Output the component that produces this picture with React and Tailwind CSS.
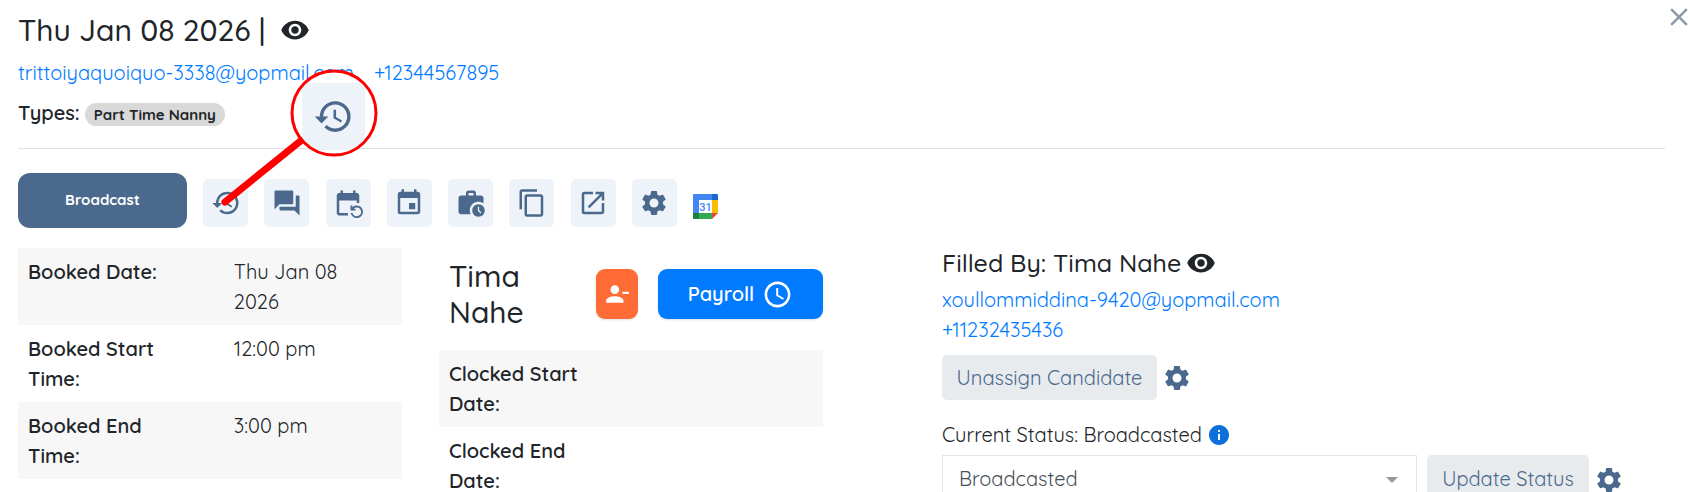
import {
  MdClose,
  MdContentCopy,
  MdEvent,
  MdEventRepeat,
  MdForum,
  MdHistory,
  MdInfo,
  MdOpenInNew,
  MdPersonRemove,
  MdSchedule,
  MdSettings,
  MdVisibility,
  MdWorkHistory,
} from "react-icons/md";

const tools = [
  { label: "History", Icon: MdHistory },
  { label: "Messages", Icon: MdForum },
  { label: "Repeat booking", Icon: MdEventRepeat },
  { label: "Event", Icon: MdEvent },
  { label: "Work history", Icon: MdWorkHistory },
  { label: "Copy", Icon: MdContentCopy },
  { label: "Open", Icon: MdOpenInNew },
  { label: "Settings", Icon: MdSettings },
];

const booked = [
  ["Booked Date:", "Thu Jan 08 2026"],
  ["Booked Start Time:", "12:00 pm"],
  ["Booked End Time:", "3:00 pm"],
];

const clocked = [
  ["Clocked Start Date:", ""],
  ["Clocked End Date:", ""],
];

function DetailTable({ rows }) {
  return (
    <table className="w-full table-fixed text-left">
      <tbody>
        {rows.map(([label, value]) => (
          <tr key={label} className="align-top odd:bg-[#f7f7f7]">
            <th scope="row" className="w-[51%] pt-[9px] pb-2 pr-10 pl-[10px] font-semibold">
              {label}
            </th>
            <td className="pt-[9px] pb-2 pr-10 pl-5">{value}</td>
          </tr>
        ))}
      </tbody>
    </table>
  );
}

function GoogleCalendar() {
  return (
    <svg viewBox="0 0 25 25" className="size-[25px]" aria-hidden="true">
      <path d="M1 0h18v6H6v13H0V1a1 1 0 0 1 1-1z" fill="#4285f4" />
      <path d="M19 0h5a1 1 0 0 1 1 1v5h-6z" fill="#1967d2" />
      <path d="M19 6h6v13h-6z" fill="#fbbc04" />
      <path d="M6 19h13v6H6z" fill="#34a853" />
      <path d="M0 19h6v6H1a1 1 0 0 1-1-1z" fill="#188038" />
      <path d="M19 19h6l-6 6z" fill="#ea4335" />
      <path d="M6 6h13v13H6z" fill="#fff" />
      <text x="12.5" y="16.5" textAnchor="middle" fontSize="11" fontWeight="500" fill="#4285f4" fontFamily="Roboto, sans-serif">
        31
      </text>
    </svg>
  );
}

function HistoryCallout() {
  return (
    <svg
      viewBox="0 0 170 150"
      className="pointer-events-none absolute top-[64px] left-[215px] h-[150px] w-[170px]"
      aria-hidden="true"
    >
      <line x1="10" y1="138" x2="88" y2="75" stroke="#ff0000" strokeWidth="7" strokeLinecap="round" />
      <circle cx="119" cy="49" r="42" fill="#fff" />
      <clipPath id="lens">
        <circle cx="119" cy="49" r="42" />
      </clipPath>
      <rect x="87" y="19" width="63" height="67" fill="#eef3fa" clipPath="url(#lens)" />
      <MdHistory x="98" y="32" size="41" color="#4a698c" />
      <circle cx="119" cy="49" r="42" fill="none" stroke="#ff0000" strokeWidth="3" />
    </svg>
  );
}

export default function App() {
  return (
    <div className="relative h-screen overflow-hidden bg-white pr-[26px] pl-[18px] font-['Quicksand','Lato',sans-serif] text-[20px] leading-[30px] text-[#212529]">
      <button type="button" aria-label="Close" className="absolute top-[2px] -right-[3px] text-[#8f99a6]">
        <MdClose className="size-[30px]" />
      </button>

      <header className="border-b border-[#dfe1e3] pb-5">
        <div className="flex items-center gap-[15px] pt-3">
          <h1 className="text-[30px] leading-[36px] font-medium">Thu Jan 08 2026 |</h1>
          <button type="button" aria-label="View booking">
            <MdVisibility className="size-[30px]" />
          </button>
        </div>
        <div className="mt-[10px] flex gap-5 text-[#007bff]">
          <a href="mailto:trittoiyaquoiquo-3338@yopmail.com">trittoiyaquoiquo-3338@yopmail.com</a>
          <a href="tel:+12344567895">+12344567895</a>
        </div>
        <div className="mt-[10px] flex items-center gap-[5px] font-semibold">
          <span>Types:</span>
          <span className="mt-[2px] rounded-full bg-[#d9d9d9] px-[9px] text-[15px] leading-[23px] font-bold">Part Time Nanny</span>
        </div>
      </header>

      <div className="mt-6 flex items-start gap-4">
        <button type="button" className="h-[55px] w-[169px] rounded-xl bg-[#4a698c] pb-[2px] text-[15px] leading-6 font-bold text-white">
          Broadcast
        </button>
        <div className="mt-[6px] flex w-[474px] justify-between">
          {tools.map(({ label, Icon }) => (
            <button
              key={label}
              type="button"
              aria-label={label}
              className="flex h-12 w-[45px] items-center justify-center rounded-[5px] bg-[#eef3fa] text-[#4a698c]"
            >
              <Icon className="size-[30px]" />
            </button>
          ))}
        </div>
        <button type="button" aria-label="Google Calendar" className="mt-[21px]">
          <GoogleCalendar />
        </button>
      </div>

      <main className="mt-5 grid grid-cols-[384fr_384fr_805fr] gap-[37px]">
        <section>
          <DetailTable rows={booked} />
        </section>

        <section>
          <div className="mt-[10px] mb-[20px] flex items-center gap-5">
            <h2 className="flex-1 pr-10 pl-[10px] text-[30px] leading-[36px] font-medium">Tima Nahe</h2>
            <button
              type="button"
              aria-label="Remove person"
              className="flex h-[50px] w-[42px] items-center justify-center rounded-[9px] bg-[#ff6b35] text-white shadow"
            >
              <MdPersonRemove className="size-[26px]" />
            </button>
            <button
              type="button"
              className="flex h-[50px] w-[165px] items-center justify-center gap-2 rounded-[9px] bg-[#007bff] font-semibold text-white shadow"
            >
              Payroll
              <MdSchedule className="size-[31px]" />
            </button>
          </div>
          <DetailTable rows={clocked} />
        </section>

        <section className="pl-[82px]">
          <div className="flex items-center gap-[5px]">
            <h2 className="text-[25px] leading-[30px] font-medium">Filled By: Tima Nahe</h2>
            <button type="button" aria-label="View candidate">
              <MdVisibility className="size-[30px]" />
            </button>
          </div>
          <div className="mt-[7px] flex flex-col items-start text-[#007bff]">
            <a href="mailto:xoullommiddina-9420@yopmail.com">xoullommiddina-9420@yopmail.com</a>
            <a href="tel:+11232435436">+11232435436</a>
          </div>
          <div className="mt-[10px] flex items-center gap-[5px] text-[#4a698c]">
            <button type="button" className="h-[45px] w-[215px] rounded-[5px] bg-[#e8ebee]">
              Unassign Candidate
            </button>
            <button type="button" aria-label="Assignment settings">
              <MdSettings className="size-[30px]" />
            </button>
          </div>
          <div className="mt-5 flex items-center gap-[5px]">
            <label htmlFor="status">Current Status: Broadcasted</label>
            <MdInfo className="size-6 text-[#0d6fdb]" />
          </div>
          <div className="mt-[5px] flex items-start text-[#4a698c]">
            <div className="relative mr-[10px] flex-1">
              <select
                id="status"
                className="h-12 w-full appearance-none border border-[#e5e5e5] bg-white px-4 text-[#495057]"
              >
                <option>Broadcasted</option>
              </select>
              <span className="pointer-events-none absolute top-[22px] right-[19px] border-x-[6px] border-t-[6px] border-x-transparent border-t-[#999999]" />
            </div>
            <button type="button" className="h-12 w-[162px] rounded-[5px] bg-[#e8ebee]">
              Update Status
            </button>
            <button type="button" aria-label="Status settings" className="mt-[10px] mr-[41px] ml-[5px]">
              <MdSettings className="size-[30px]" />
            </button>
          </div>
        </section>
      </main>

      <HistoryCallout />
    </div>
  );
}
